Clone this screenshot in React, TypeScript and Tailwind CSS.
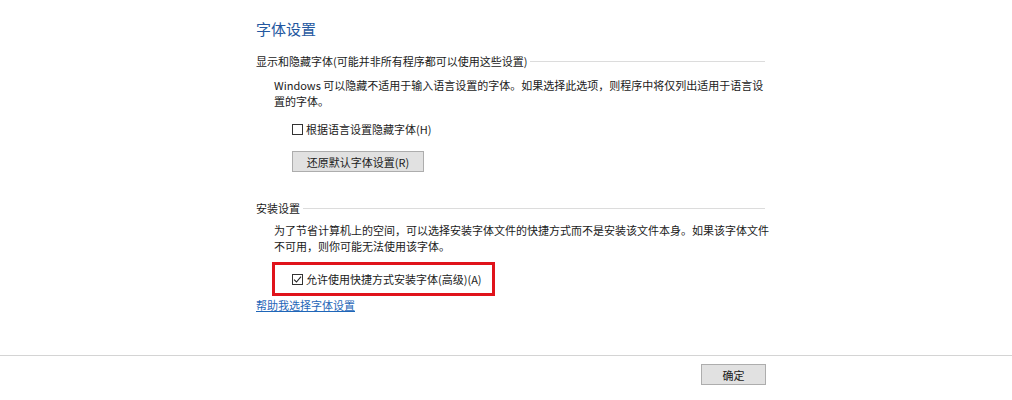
function CheckBox({ checked }: { checked?: boolean }) {
  return (
    <span className="flex h-[11px] w-[11px] shrink-0 items-center justify-center border border-[#333333] bg-white">
      {checked && (
        <svg width="9" height="9" viewBox="0 0 9 9" fill="none">
          <path d="M1 4.6 L3.5 7 L8 1.6" stroke="#222222" strokeWidth="1.1" />
        </svg>
      )}
    </span>
  );
}

function SectionHeader({ title }: { title: string }) {
  return (
    <div className="flex items-center gap-[3px] text-[11px] leading-[16px] text-[#1a1a1a]">
      <span className="whitespace-nowrap">{title}</span>
      <span className="h-px flex-1 bg-[#dcdcdc]" />
    </div>
  );
}

export default function App() {
  return (
    <div className="h-[400px] w-[1012px] overflow-hidden bg-white font-['Noto_Sans_CJK_SC','Microsoft_YaHei',sans-serif] text-[#1a1a1a]">
      <div className="w-[765px] pl-[256px]">
        <div className="pt-[20px] text-[15px] leading-[18px] text-[#2458a0]">字体设置</div>

        <div className="mt-[15px]">
          <SectionHeader title="显示和隐藏字体(可能并非所有程序都可以使用这些设置)" />
        </div>

        <p className="ml-[18px] mt-[8px] whitespace-nowrap text-[11px] leading-[16px]">
          Windows 可以隐藏不适用于输入语言设置的字体。如果选择此选项，则程序中将仅列出适用于语言设
          <br />
          置的字体。
        </p>

        <label className="ml-[36px] mt-[12px] flex items-center gap-[3px] text-[11px] leading-[16px]">
          <CheckBox />
          <span>根据语言设置隐藏字体(H)</span>
        </label>

        <button className="ml-[36px] mt-[14px] flex h-[21px] w-[132px] items-center justify-center border border-[#adadad] bg-[#e1e1e1] text-[11px] leading-[16px] text-[#1a1a1a]">
          还原默认字体设置(R)
        </button>

        <div className="mt-[28px]">
          <SectionHeader title="安装设置" />
        </div>

        <p className="ml-[18px] mt-[6px] whitespace-nowrap text-[11px] leading-[16px]">
          为了节省计算机上的空间，可以选择安装字体文件的快捷方式而不是安装该文件本身。如果该字体文件
          <br />
          不可用，则你可能无法使用该字体。
        </p>

        <div className="ml-[16px] mt-[8px] flex h-[34px] w-[223px] items-center border-[3px] border-[#e0131b] pl-[17px]">
          <label className="flex items-center gap-[3px] text-[11px] leading-[16px]">
            <CheckBox checked />
            <span>允许使用快捷方式安装字体(高级)(A)</span>
          </label>
        </div>

        <a href="#" className="mt-[1px] block w-fit text-[11px] leading-[16px] text-[#1f66b8] underline">
          帮助我选择字体设置
        </a>
      </div>

      <div className="mt-[42px] h-px w-full bg-[#d4d4d4]" />

      <div className="flex justify-end pr-[246px] pt-[8px]">
        <button className="flex h-[21px] w-[65px] items-center justify-center border border-[#adadad] bg-[#e1e1e1] text-[11px] leading-[16px] text-[#1a1a1a]">
          确定
        </button>
      </div>
    </div>
  );
}
